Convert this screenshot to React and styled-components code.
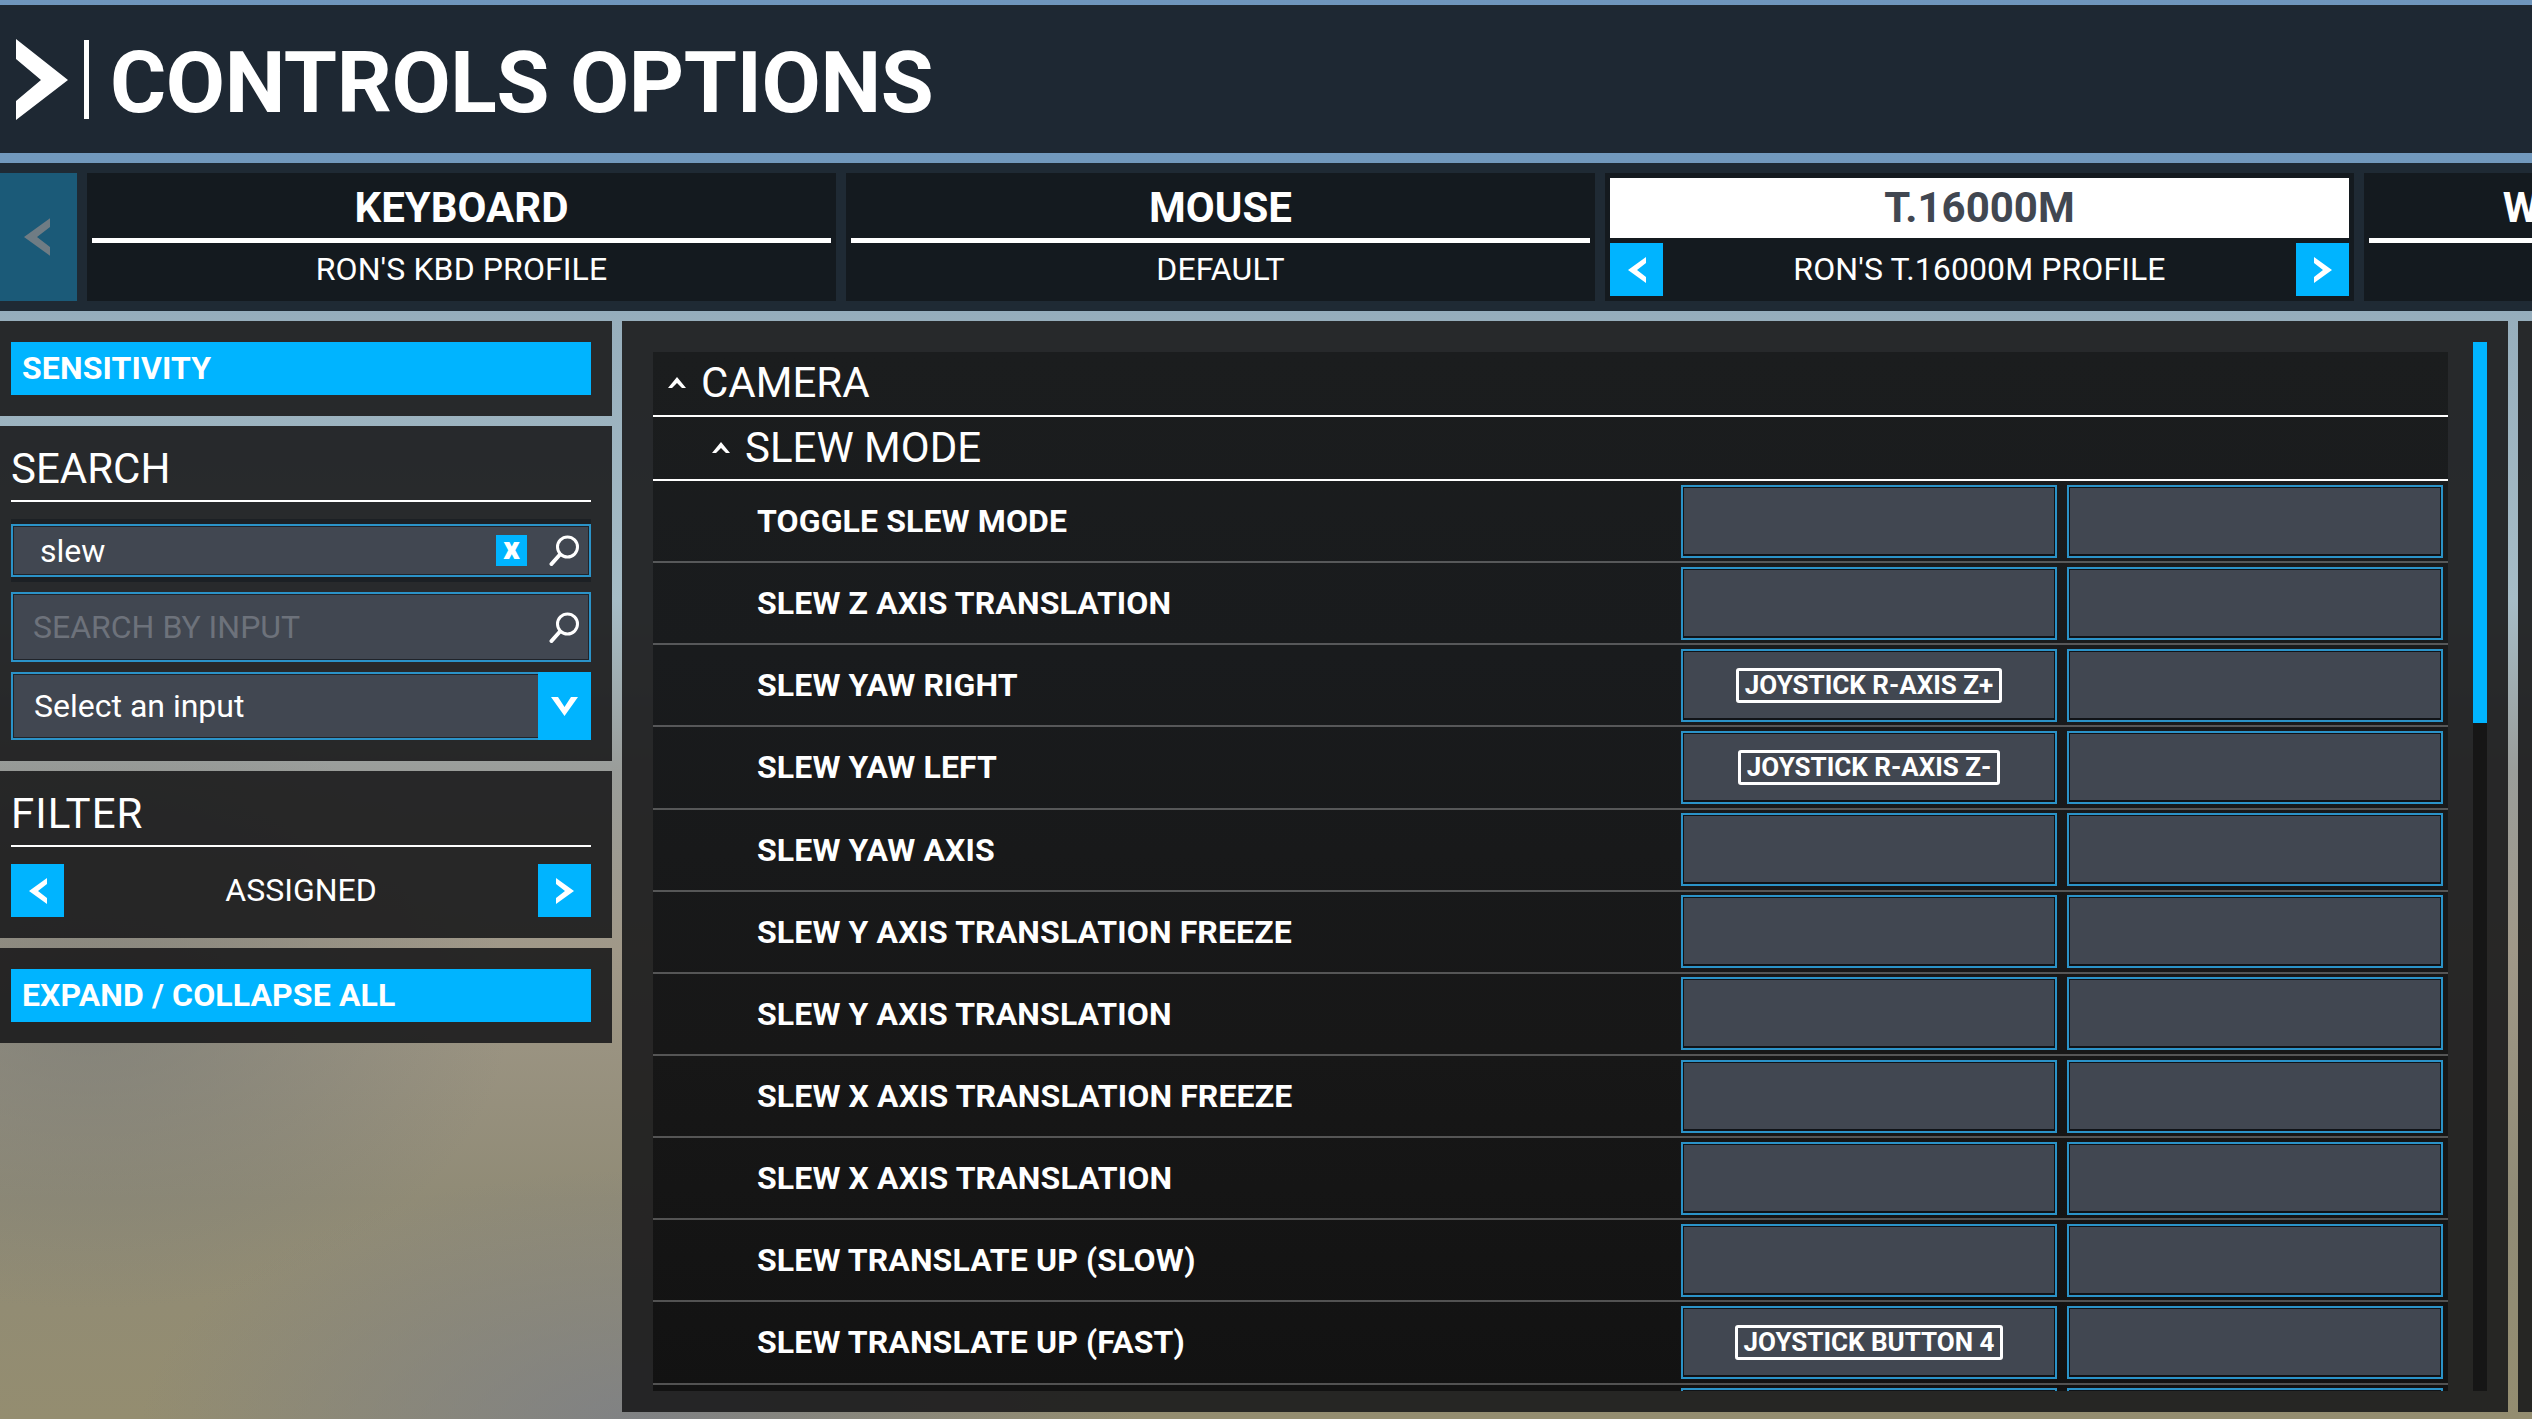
import React from "react";
import styled, { createGlobalStyle } from "styled-components";

const Global = createGlobalStyle`
  html, body { margin: 0; padding: 0; width: 2532px; height: 1419px; overflow: hidden; }
  body {
    font-family: Roboto, "Liberation Sans", sans-serif;
    color: #fff;
    background:
      radial-gradient(ellipse 420px 300px at 90px 1010px, rgba(120,122,118,.65), rgba(120,122,118,0)),
      radial-gradient(ellipse 500px 260px at 640px 1430px, rgba(125,128,135,.9), rgba(125,128,135,0)),
      linear-gradient(180deg, #6f96bd 0, #7299bd 160px, #97aebc 320px, #a6bcc6 600px, #9a9d9a 770px, #a09888 950px, #908b76 1200px, #948d70 1419px);
  }
  * { box-sizing: border-box; }
`;

const Page = styled.div`
  width: 2532px;
  height: 1419px;
  padding-top: 5px;
  display: flex;
  flex-direction: column;
  overflow: hidden;
`;

const Header = styled.header`
  height: 148px;
  margin-bottom: 10px;
  padding-left: 16px;
  display: flex;
  align-items: center;
  background: #1e2833;
`;
const Logo = styled.svg`
  width: 52px;
  height: 81px;
  margin-top: 1px;
  flex: none;
`;
const TitleBar = styled.div`
  width: 5px;
  height: 79px;
  margin: 0 21px 0 16px;
  background: #fff;
`;
const Title = styled.h1`
  margin: 0;
  padding-top: 7px;
  font-size: 86px;
  line-height: 1;
  font-weight: 700;
  letter-spacing: -0.4px;
  white-space: nowrap;
`;

const TabBar = styled.nav`
  height: 148px;
  margin-bottom: 10px;
  padding: 10px 0;
  display: flex;
  gap: 10px;
  background: #1f2a34;
  overflow: hidden;
`;
const PrevTabs = styled.div`
  flex: none;
  width: 77px;
  display: flex;
  align-items: center;
  justify-content: flex-end;
  padding-right: 27px;
  background: #1b5a78;
`;
const Tab = styled.div`
  flex: none;
  width: 749px;
  padding: 5px;
  background: #141a1f;
  display: flex;
  flex-direction: column;
`;
const TabName = styled.div`
  height: 60px;
  font-size: 42px;
  font-weight: 700;
  line-height: 59px;
  text-align: center;
  white-space: nowrap;
  background: ${(p) => (p.$active ? "#fff" : "transparent")};
  color: ${(p) => (p.$active ? "#414751" : "#fff")};
`;
const TabRule = styled.div`
  height: 5px;
  background: ${(p) => (p.$active ? "transparent" : "#fff")};
`;
const TabProfile = styled.div`
  height: 53px;
  display: flex;
  align-items: center;
  justify-content: space-between;
  font-size: 32px;
  letter-spacing: 0.1px;
`;
const ProfileText = styled.span`
  flex: 1;
  padding-bottom: 2px;
  text-align: center;
  white-space: nowrap;
`;
const ArrowBtn = styled.div`
  flex: none;
  width: 53px;
  height: 53px;
  background: #00b4ff;
  display: flex;
  align-items: center;
  justify-content: center;
`;

const Content = styled.main`
  height: 1091px;
  display: flex;
  gap: 10px;
  align-items: flex-start;
`;
const Side = styled.aside`
  flex: none;
  width: 612px;
  display: flex;
  flex-direction: column;
  gap: 10px;
`;
const Panel = styled.section`
  padding: ${(p) => p.$pad || "21px 21px 21px 11px"};
  background: rgba(28, 28, 29, 0.91);
`;
const BlueButton = styled.div`
  height: 53px;
  padding: 0 0 2px 11px;
  display: flex;
  align-items: center;
  background: #00b4ff;
  font-size: 32px;
  font-weight: 700;
  letter-spacing: 0.12px;
`;
const PanelTitle = styled.h2`
  margin: 0 0 17px;
  padding-bottom: 7px;
  border-bottom: 2px solid #fff;
  font-size: 42px;
  line-height: 48px;
  font-weight: 400;
  letter-spacing: ${(p) => p.$ls || 0}px;
`;
const Halo = styled.div`
  padding: 5px 0;
  margin-bottom: 10px;
  background: #1c2024;
`;
const Field = styled.div`
  height: ${(p) => p.$h}px;
  margin-bottom: ${(p) => p.$mb || 0}px;
  display: flex;
  align-items: center;
  background: #414751;
  border: 2px solid #2b93c8;
  box-shadow: inset 0 0 0 1px #20242a;
  font-size: 32px;
  padding-left: ${(p) => p.$pl}px;
`;
const FieldText = styled.span`
  flex: 1;
  color: ${(p) => (p.$muted ? "#6d727b" : "#fff")};
`;
const ClearBtn = styled.div`
  flex: none;
  width: 31px;
  height: 31px;
  margin-right: 22px;
  background: #00b4ff;
  display: flex;
  align-items: center;
  justify-content: center;
  font-size: 32px;
  line-height: 1;
  font-weight: 900;
  padding-bottom: 5px;
`;
const SearchSvg = styled.svg`
  flex: none;
  width: 31px;
  height: 31px;
  margin-right: 9px;
`;
const SelectBtn = styled.div`
  flex: none;
  width: 53px;
  height: 68px;
  margin: -2px -2px -2px 0;
  background: #00b4ff;
  display: flex;
  align-items: center;
  justify-content: center;
`;
const FilterRow = styled.div`
  display: flex;
  align-items: center;
  font-size: 32px;
`;

const Main = styled.section`
  flex: none;
  width: 1886px;
  height: 1091px;
  padding: 21px 21px 21px 31px;
  display: flex;
  gap: 25px;
  background: rgba(28, 28, 29, 0.91);
`;
const List = styled.div`
  flex: none;
  width: 1795px;
  margin-top: 10px;
  overflow: hidden;
  background: linear-gradient(180deg, #1b1d1e 0, #191b1d 300px, #171717 700px, #121212 100%);
`;
const Track = styled.div`
  flex: none;
  width: 14px;
  background: #161616;
`;
const Thumb = styled.div`
  height: 381px;
  background: #00b4ff;
`;
const SectionRow = styled.div`
  height: ${(p) => p.$h}px;
  padding: 0 0 2px ${(p) => p.$indent}px;
  display: flex;
  align-items: center;
  gap: 15px;
  border-bottom: 2px solid #fff;
  font-size: 42px;
`;
const Row = styled.div`
  flex: none;
  height: 82.15px;
  display: grid;
  grid-template-columns: 1018px 376px 376px;
  column-gap: 10px;
  align-items: center;
  border-bottom: 2px solid rgba(255, 255, 255, 0.27);
`;
const RowLabel = styled.div`
  padding-left: 104px;
  font-size: 32px;
  font-weight: 700;
  letter-spacing: 0.12px;
  white-space: nowrap;
`;
const BindCell = styled.div`
  height: 73px;
  display: flex;
  align-items: center;
  justify-content: center;
  background: #414751;
  border: 2px solid #2b93c8;
  box-shadow: inset 0 0 0 1px #101317, inset 0 -1px 0 1px #101317;
`;
const Badge = styled.span`
  height: 35px;
  padding: 0 6px;
  display: flex;
  align-items: center;
  border: 3px solid #fff;
  border-radius: 3px;
  font-size: 26px;
  font-weight: 700;
  white-space: nowrap;
`;
const RightPanel = styled.div`
  flex: 1;
  height: 1091px;
  background: rgba(28, 28, 29, 0.91);
`;

const Chevron = ({ dir = "left", color = "#fff", w = 18, h = 26 }) => (
  <svg width={w} height={h} viewBox="0 0 18 26">
    <polygon
      fill={color}
      points={
        dir === "left"
          ? "18,0 0,13 18,26 18,20 9,13 18,6"
          : "0,0 18,13 0,26 0,20 9,13 0,6"
      }
    />
  </svg>
);
const Caret = () => (
  <svg width="18" height="11" viewBox="0 0 18 11">
    <polygon fill="#fff" points="0,11 9,0 18,11 14,11 9,6 4,11" />
  </svg>
);
const SearchIcon = () => (
  <SearchSvg viewBox="0 0 31 31">
    <circle cx="18.5" cy="12" r="10" fill="none" stroke="#fff" strokeWidth="3" />
    <line x1="11" y1="19.5" x2="2.5" y2="29" stroke="#fff" strokeWidth="4" strokeLinecap="round" />
  </SearchSvg>
);

const rows = [
  ["TOGGLE SLEW MODE"],
  ["SLEW Z AXIS TRANSLATION"],
  ["SLEW YAW RIGHT", "JOYSTICK R-AXIS Z+"],
  ["SLEW YAW LEFT", "JOYSTICK R-AXIS Z-"],
  ["SLEW YAW AXIS"],
  ["SLEW Y AXIS TRANSLATION FREEZE"],
  ["SLEW Y AXIS TRANSLATION"],
  ["SLEW X AXIS TRANSLATION FREEZE"],
  ["SLEW X AXIS TRANSLATION"],
  ["SLEW TRANSLATE UP (SLOW)"],
  ["SLEW TRANSLATE UP (FAST)", "JOYSTICK BUTTON 4"],
  [""],
];

export default function App() {
  return (
    <Page>
      <Global />
      <Header>
        <Logo viewBox="0 0 52 81">
          <polygon fill="#fff" points="0,0 52,41 0,81 0,62 25,41 0,20" />
        </Logo>
        <TitleBar />
        <Title>CONTROLS OPTIONS</Title>
      </Header>

      <TabBar>
        <PrevTabs>
          <Chevron color="#6f7c84" w={26} h={38} />
        </PrevTabs>
        <Tab>
          <TabName>KEYBOARD</TabName>
          <TabRule />
          <TabProfile><ProfileText>RON'S KBD PROFILE</ProfileText></TabProfile>
        </Tab>
        <Tab>
          <TabName>MOUSE</TabName>
          <TabRule />
          <TabProfile><ProfileText>DEFAULT</ProfileText></TabProfile>
        </Tab>
        <Tab>
          <TabName $active>T.16000M</TabName>
          <TabRule $active />
          <TabProfile>
            <ArrowBtn><Chevron /></ArrowBtn>
            <ProfileText>RON'S T.16000M PROFILE</ProfileText>
            <ArrowBtn><Chevron dir="right" /></ArrowBtn>
          </TabProfile>
        </Tab>
        <Tab>
          <TabName>WIRELESS CONTROLLER</TabName>
          <TabRule />
          <TabProfile />
        </Tab>
      </TabBar>

      <Content>
        <Side>
          <Panel>
            <BlueButton>SENSITIVITY</BlueButton>
          </Panel>
          <Panel $pad="19px 21px 21px 11px">
            <PanelTitle>SEARCH</PanelTitle>
            <Halo>
              <Field $h={53} $pl={27}>
                <FieldText>slew</FieldText>
                <ClearBtn>x</ClearBtn>
                <SearchIcon />
              </Field>
            </Halo>
            <Field $h={70} $pl={20} $mb={10}>
              <FieldText $muted>SEARCH BY INPUT</FieldText>
              <SearchIcon />
            </Field>
            <Field $h={68} $pl={21}>
              <FieldText>Select an input</FieldText>
              <SelectBtn>
                <svg width="27" height="19" viewBox="0 0 27 19">
                  <polygon fill="#fff" points="0,0 7,0 13.5,10 20,0 27,0 13.5,19" />
                </svg>
              </SelectBtn>
            </Field>
          </Panel>
          <Panel $pad="19px 21px 21px 11px">
            <PanelTitle $ls={1}>FILTER</PanelTitle>
            <FilterRow>
              <ArrowBtn><Chevron /></ArrowBtn>
              <ProfileText>ASSIGNED</ProfileText>
              <ArrowBtn><Chevron dir="right" /></ArrowBtn>
            </FilterRow>
          </Panel>
          <Panel>
            <BlueButton>EXPAND / COLLAPSE ALL</BlueButton>
          </Panel>
        </Side>

        <Main>
          <List>
            <SectionRow $h={65} $indent={15}><Caret />CAMERA</SectionRow>
            <SectionRow $h={64} $indent={59}><Caret />SLEW MODE</SectionRow>
            {rows.map(([label, bind], i) => (
              <Row key={i}>
                <RowLabel>{label}</RowLabel>
                <BindCell>{bind && <Badge>{bind}</Badge>}</BindCell>
                <BindCell />
              </Row>
            ))}
          </List>
          <Track><Thumb /></Track>
        </Main>
        <RightPanel />
      </Content>
    </Page>
  );
}
